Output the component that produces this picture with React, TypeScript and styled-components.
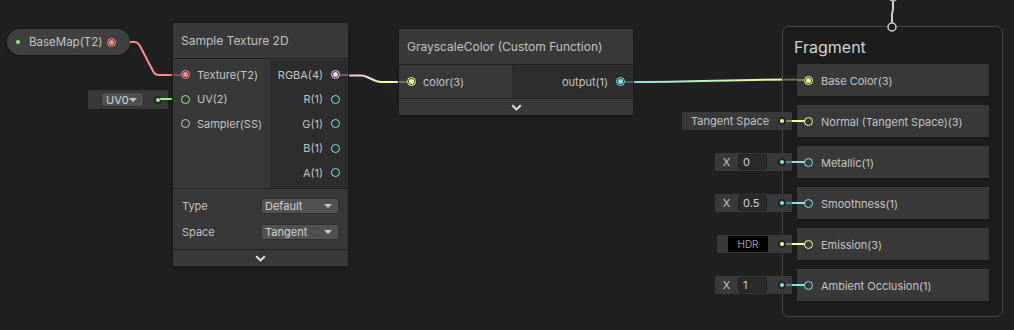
import React from 'react';
import styled, { createGlobalStyle } from 'styled-components';

const C = {
  tex: '#ff8b8b',
  v2: '#9aef92',
  v3: '#f6ff9a',
  v4: '#fbcbf4',
  f: '#84e4e7',
  ss: '#c8c8c8',
};

const Global = createGlobalStyle`
  html, body { margin: 0; padding: 0; background: #202020; }
  body { font-family: Inter, "Noto Sans", sans-serif; -webkit-font-smoothing: antialiased; }
  * { box-sizing: border-box; }
`;

const Canvas = styled.div`
  position: relative;
  width: 1014px;
  height: 330px;
  overflow: hidden;
  background: #202020;
`;

const Layer = styled.svg`
  position: absolute;
  left: 0;
  top: 0;
  width: 1014px;
  height: 330px;
  pointer-events: none;
`;

/* ---------- property pill ---------- */
const Pill = styled.div`
  position: absolute;
  left: 7px;
  top: 29px;
  width: 123px;
  height: 26px;
  border-radius: 13px;
  background: #404040;
  box-shadow: 0 1px 3px rgba(0, 0, 0, 0.35);
  display: flex;
  align-items: center;
  padding: 0 14px 0 9px;
  font-size: 11.5px;
  color: #c4c4c4;
  white-space: nowrap;
`;

const ExposedDot = styled.span`
  width: 4px;
  height: 4px;
  border-radius: 50%;
  background: #8cf27e;
  margin-right: 9px;
  flex: none;
`;

/* ---------- ports ---------- */
const Ring = styled.span<{ $c: string; $filled?: boolean; $push?: boolean }>`
  position: relative;
  flex: none;
  width: 9px;
  height: 9px;
  border-radius: 50%;
  border: 1.5px solid ${p => p.$c};
  margin-left: ${p => (p.$push ? 'auto' : '0')};
  &::after {
    content: '';
    position: absolute;
    inset: 1px;
    border-radius: 50%;
    background: ${p => (p.$filled ? p.$c : 'transparent')};
  }
`;

const Row = styled.div<{ $out?: boolean; $h: number }>`
  position: relative;
  height: ${p => p.$h}px;
  display: flex;
  align-items: center;
  flex-direction: ${p => (p.$out ? 'row-reverse' : 'row')};
  gap: ${p => (p.$out ? 8 : 7)}px;
  padding: ${p => (p.$out ? '0 8px 0 0' : '0 0 0 8px')};
  font-size: 11px;
  color: #c4c4c4;
  white-space: nowrap;
`;

const Stub = styled.span<{ $c: string; $out?: boolean }>`
  position: absolute;
  top: 50%;
  margin-top: -1px;
  height: 2px;
  width: 8px;
  ${p => (p.$out ? 'right: 0;' : 'left: 0;')}
  background: ${p => p.$c};
  opacity: 0.32;
`;

type PortProps = { label: string; c: string; h: number; out?: boolean; connected?: boolean };

const Port = ({ label, c, h, out, connected }: PortProps) => (
  <Row $out={out} $h={h}>
    {connected && <Stub $c={c} $out={out} />}
    <Ring $c={c} $filled={connected} />
    <span>{label}</span>
  </Row>
);

/* ---------- nodes ---------- */
const Node = styled.div<{ $x: number; $y: number; $w: number }>`
  position: absolute;
  left: ${p => p.$x}px;
  top: ${p => p.$y}px;
  width: ${p => p.$w}px;
  background: #2e2e2e;
  box-shadow: 0 0 0 1px #1b1b1b, 0 2px 5px rgba(0, 0, 0, 0.35);
  border-radius: 2px;
`;

const Title = styled.div`
  height: 36px;
  border-bottom: 1px solid #232323;
  background: #393939;
  display: flex;
  align-items: center;
  padding-left: 8px;
  font-size: 12px;
  color: #c2c2c2;
  white-space: nowrap;
`;

const Body = styled.div<{ $in: number; $h: number }>`
  display: grid;
  grid-template-columns: ${p => p.$in}px 1fr;
  height: ${p => p.$h}px;
`;

const InCol = styled.div<{ $pad: number }>`
  background: #383838;
  padding-top: ${p => p.$pad}px;
`;

const OutCol = styled.div<{ $pad: number }>`
  background: #2d2d2d;
  border-left: 1px solid #2a2a2a;
  padding-top: ${p => p.$pad}px;
`;

const Settings = styled.div`
  background: #383838;
  border-top: 1px solid #232323;
  padding: 4px 9px;
`;

const SettingRow = styled.div`
  height: 26px;
  display: flex;
  align-items: center;
  justify-content: space-between;
  font-size: 11px;
  color: #c4c4c4;
`;

const Select = styled.div<{ $w: number; $h?: number }>`
  width: ${p => p.$w}px;
  height: ${p => p.$h ?? 16}px;
  background: #515151;
  border: 1px solid #303030;
  border-radius: 3px;
  display: flex;
  align-items: center;
  justify-content: space-between;
  padding: 0 6px 0 3px;
  font-size: 11px;
  color: #d2d2d2;
`;

const Caret = styled.span`
  width: 0;
  height: 0;
  border-left: 4px solid transparent;
  border-right: 4px solid transparent;
  border-top: 4px solid #c8c8c8;
`;

const Footer = styled.div`
  height: 17px;
  background: #393939;
  border-top: 1px solid #232323;
  display: flex;
  align-items: center;
  justify-content: center;
`;

const Chevron = () => (
  <svg width="11" height="7" viewBox="0 0 11 7">
    <polyline points="1.2,1.2 5.5,5.4 9.8,1.2" fill="none" stroke="#e4e4e4" strokeWidth="2" />
  </svg>
);

/* ---------- UV inline ---------- */
const UVBox = styled.div`
  position: absolute;
  left: 88px;
  top: 90px;
  width: 80px;
  height: 19px;
  background: #393939;
  display: flex;
  align-items: center;
  padding-left: 13px;
`;

const SmallDot = styled.span<{ $c: string; $gap?: number }>`
  width: 4px;
  height: 4px;
  border-radius: 50%;
  background: ${p => p.$c};
  box-shadow: 0 0 0 2px #262626;
  margin-left: ${p => p.$gap ?? 0}px;
  flex: none;
`;

const SelectText = styled.span`
  padding-left: 1px;
`;

/* ---------- context ---------- */
const Context = styled.div`
  position: absolute;
  left: 782px;
  top: 26px;
  width: 221px;
  height: 291px;
  border: 1px solid #474747;
  border-radius: 7px;
  background: rgba(28, 28, 28, 0.62);
  padding: 10px 14px 0 14px;
`;

const ContextTitle = styled.div`
  height: 20px;
  line-height: 20px;
  margin-left: -3px;
  margin-bottom: 7px;
  font-size: 16px;
  color: #d2d2d2;
`;

const Blocks = styled.div`
  display: flex;
  flex-direction: column;
  gap: 9px;
`;

const Block = styled.div`
  position: relative;
  width: 192px;
  height: 32px;
  background: #393939;
  box-shadow: 0 1px 2px rgba(0, 0, 0, 0.25);
  display: flex;
  align-items: center;
  padding-left: 7px;
  gap: 8px;
  font-size: 11px;
  color: #c4c4c4;
  white-space: nowrap;
`;

const BlockLabel = styled.span`
  padding-top: 2px;
`;

const Inline = styled.div<{ $w: number }>`
  position: absolute;
  right: calc(100% + 5px);
  top: 7px;
  width: ${p => p.$w}px;
  height: 18px;
  background: #393939;
  display: flex;
  align-items: center;
  font-size: 11px;
  color: #c4c4c4;
  white-space: nowrap;
`;

const InlineText = styled.span`
  padding-left: 9px;
`;

const XLabel = styled.span`
  width: 23px;
  text-align: center;
  font-size: 11px;
  color: #c4c4c4;
`;

const Field = styled.div`
  width: 29px;
  height: 16px;
  background: #2a2a2a;
  border: 1px solid #212121;
  border-radius: 3px;
  padding-left: 4px;
  display: flex;
  align-items: center;
  font-size: 11px;
  color: #d2d2d2;
`;

const Swatch = styled.div`
  margin-left: 11px;
  width: 40px;
  height: 16px;
  background: #000;
  display: flex;
  align-items: center;
  justify-content: center;
  font-size: 10px;
  color: #9c9c9c;
`;

const Link = styled.span<{ $c: string }>`
  position: absolute;
  left: -15px;
  top: 15px;
  width: 23px;
  height: 2px;
  background: linear-gradient(
    to right,
    color-mix(in srgb, ${p => p.$c} 40%, #3a3a3a) 0 10px,
    ${p => p.$c} 10px
  );
`;

const LinkDot = styled.span<{ $c: string }>`
  position: absolute;
  left: -17px;
  top: 14px;
  width: 4px;
  height: 4px;
  border-radius: 50%;
  background: ${p => p.$c};
  box-shadow: 0 0 0 2px #262626;
`;

const BlockStub = styled.span<{ $c: string }>`
  position: absolute;
  left: 0;
  top: 15px;
  width: 7px;
  height: 2px;
  background: ${p => p.$c};
  opacity: 0.35;
`;

type BlockDef = {
  label: string;
  c: string;
  connected?: boolean;
  inline?: React.ReactNode;
  inlineW?: number;
};

const blocks: BlockDef[] = [
  { label: 'Base Color(3)', c: C.v3, connected: true },
  { label: 'Normal (Tangent Space)(3)', c: C.v3, inlineW: 110, inline: <InlineText>Tangent Space</InlineText> },
  { label: 'Metallic(1)', c: C.f, inlineW: 77, inline: <><XLabel>X</XLabel><Field>0</Field></> },
  { label: 'Smoothness(1)', c: C.f, inlineW: 77, inline: <><XLabel>X</XLabel><Field>0.5</Field></> },
  { label: 'Emission(3)', c: C.v3, inlineW: 75, inline: <Swatch>HDR</Swatch> },
  { label: 'Ambient Occlusion(1)', c: C.f, inlineW: 77, inline: <><XLabel>X</XLabel><Field>1</Field></> },
];

export default function App() {
  return (
    <>
      <Global />
      <Canvas>
        <Pill>
          <ExposedDot />
          <span>BaseMap(T2)</span>
          <Ring $c={C.tex} $filled $push />
        </Pill>

        <UVBox>
          <Select $w={43} $h={15}>
            <SelectText>UV0</SelectText>
            <Caret />
          </Select>
          <SmallDot $c={C.v2} $gap={12} />
        </UVBox>

        <Layer>
          <defs>
            <linearGradient id="pk" gradientUnits="userSpaceOnUse" x1="356" y1="0" x2="384" y2="0">
              <stop offset="0" stopColor={C.v4} />
              <stop offset="1" stopColor={C.v3} />
            </linearGradient>
            <linearGradient id="cy" gradientUnits="userSpaceOnUse" x1="633" y1="0" x2="780" y2="0">
              <stop offset="0" stopColor={C.f} />
              <stop offset="1" stopColor={C.v3} />
            </linearGradient>
          </defs>
          <path
            d="M130 42 L134 42 Q138 42 140 46 L153 71 Q155 75 159 75 L174 75"
            fill="none"
            stroke={C.tex}
            strokeWidth="2"
          />
          <path d="M160 99 L174 99" fill="none" stroke={C.v2} strokeWidth="2" />
          <path
            d="M348 75.5 L361 75.5 Q364 75.5 367 77 L376 81 Q379 82 382 82 L400 82"
            fill="none"
            stroke="url(#pk)"
            strokeWidth="2"
          />
          <path d="M633 82 C700 82 730 79.5 800 79.5" fill="none" stroke="url(#cy)" strokeWidth="2" />
        </Layer>

        <Node $x={173} $y={23} $w={175}>
          <Title>Sample Texture 2D</Title>
          <Body $in={97} $h={129}>
            <InCol $pad={3.5}>
              <Port label="Texture(T2)" c={C.tex} h={24.5} connected />
              <Port label="UV(2)" c={C.v2} h={24.5} />
              <Port label="Sampler(SS)" c={C.ss} h={24.5} />
            </InCol>
            <OutCol $pad={3.5}>
              <Port label="RGBA(4)" c={C.v4} h={24.5} out connected />
              <Port label="R(1)" c={C.f} h={24.5} out />
              <Port label="G(1)" c={C.f} h={24.5} out />
              <Port label="B(1)" c={C.f} h={24.5} out />
              <Port label="A(1)" c={C.f} h={24.5} out />
            </OutCol>
          </Body>
          <Settings>
            <SettingRow>
              <span>Type</span>
              <Select $w={78}>
                <span>Default</span>
                <Caret />
              </Select>
            </SettingRow>
            <SettingRow>
              <span>Space</span>
              <Select $w={78}>
                <span>Tangent</span>
                <Caret />
              </Select>
            </SettingRow>
          </Settings>
          <Footer>
            <Chevron />
          </Footer>
        </Node>

        <Node $x={399} $y={29} $w={234}>
          <Title>GrayscaleColor (Custom Function)</Title>
          <Body $in={113} $h={33}>
            <InCol $pad={0}>
              <Port label="color(3)" c={C.v3} h={33} connected />
            </InCol>
            <OutCol $pad={0}>
              <Port label="output(1)" c={C.f} h={33} out connected />
            </OutCol>
          </Body>
          <Footer>
            <Chevron />
          </Footer>
        </Node>

        <Context>
          <ContextTitle>Fragment</ContextTitle>
          <Blocks>
            {blocks.map(b => (
              <Block key={b.label}>
                {b.inline && <Inline $w={b.inlineW!}>{b.inline}</Inline>}
                {b.inline && <Link $c={b.c} />}
                {b.inline && <LinkDot $c={b.c} />}
                {b.connected && <BlockStub $c={b.c} />}
                <Ring $c={b.c} $filled={b.connected} />
                <BlockLabel>{b.label}</BlockLabel>
              </Block>
            ))}
          </Blocks>
        </Context>

        <Layer>
          <circle cx="893" cy="-3" r="4" fill="#202020" stroke="#cfcfcf" strokeWidth="1.5" />
          <path d="M893 1 L893 9 L892 14 L892 23" fill="none" stroke="#cfcfcf" strokeWidth="2" />
          <circle cx="892" cy="27" r="4" fill="#202020" stroke="#cfcfcf" strokeWidth="1.5" />
        </Layer>
      </Canvas>
    </>
  );
}
